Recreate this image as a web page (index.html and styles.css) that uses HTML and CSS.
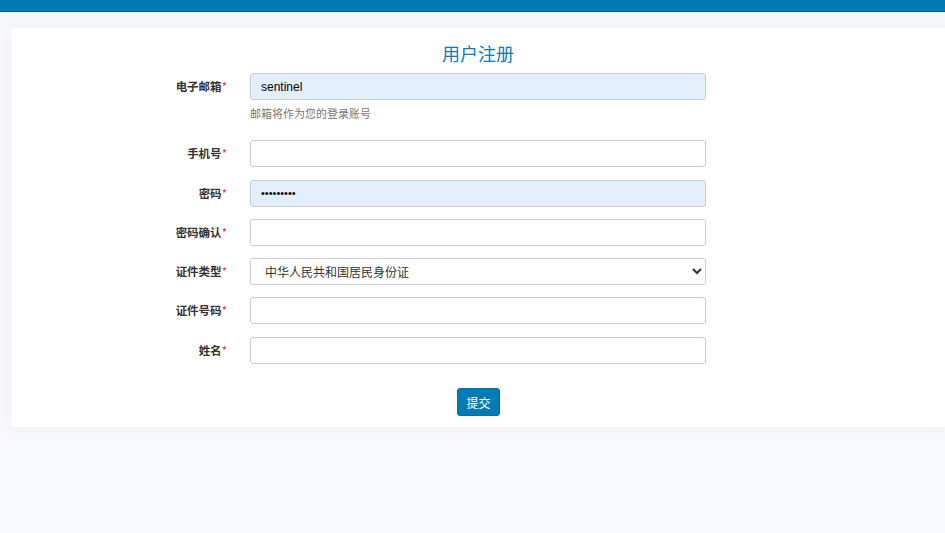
FILE: index.html
```html
<!DOCTYPE html>
<html lang="zh-CN">
<head>
<meta charset="utf-8">
<title>用户注册</title>
<link rel="stylesheet" href="styles.css">
</head>
<body>
<div class="topbar"></div>
<main class="card">
  <h1 class="title">用户注册</h1>
  <form class="form">
    <div class="row">
      <label class="label">电子邮箱<span class="req">*</span></label>
      <div class="field">
        <input class="control autofill" type="text" value="sentinel">
        <div class="help">邮箱将作为您的登录账号</div>
      </div>
    </div>
    <div class="row">
      <label class="label">手机号<span class="req">*</span></label>
      <div class="field"><input class="control" type="text"></div>
    </div>
    <div class="row">
      <label class="label">密码<span class="req">*</span></label>
      <div class="field"><input class="control autofill pw" type="password" value="sentinel1"></div>
    </div>
    <div class="row">
      <label class="label">密码确认<span class="req">*</span></label>
      <div class="field"><input class="control" type="password"></div>
    </div>
    <div class="row">
      <label class="label">证件类型<span class="req">*</span></label>
      <div class="field">
        <select class="control select">
          <option>中华人民共和国居民身份证</option>
        </select>
      </div>
    </div>
    <div class="row">
      <label class="label">证件号码<span class="req">*</span></label>
      <div class="field"><input class="control" type="text"></div>
    </div>
    <div class="row">
      <label class="label">姓名<span class="req">*</span></label>
      <div class="field"><input class="control" type="text"></div>
    </div>
    <div class="actions">
      <button class="btn" type="button">提交</button>
    </div>
  </form>
</main>
</body>
</html>
```
FILE: styles.css
```css
* { box-sizing: border-box; }
html, body { margin: 0; padding: 0; }
body {
  background: #f8f9fe;
  font-family: "Noto Sans CJK SC", "Liberation Sans", sans-serif;
  font-size: 12px;
  color: #333;
  overflow: hidden;
  width: 945px;
  height: 533px;
}
.topbar {
  height: 12px;
  background: #007bb6;
  border-bottom: 1px solid #005d8a;
  box-shadow: 0 2px 14px rgba(0, 0, 0, 0.04);
}
.card {
  margin: 16px 0 0 11px;
  width: 934px;
  height: 399px;
  background: #fff;
  box-shadow: 0 0 12px rgba(40, 50, 90, 0.06);
  padding-top: 12px;
}
.title {
  margin: 0;
  text-align: center;
  font-size: 18px;
  font-weight: normal;
  color: #0a7bbf;
  line-height: 26px;
  height: 26px;
}
.form {
  margin-top: 7px;
}
.row {
  display: flex;
  align-items: flex-start;
  margin-bottom: 12.25px;
}
.label {
  width: 216px;
  text-align: right;
  font-weight: bold;
  font-size: 11.5px;
  line-height: 27px;
  color: #333;
  flex: none;
}
.req { color: #e23a12; font-weight: normal; }
.field {
  margin-left: 23px;
  width: 456px;
}
.control {
  display: block;
  width: 456px;
  height: 27px;
  border: 1px solid #ccc;
  border-radius: 3px;
  background: #fff;
  font-family: "Liberation Sans", "Noto Sans CJK SC", sans-serif;
  font-size: 12px;
  color: #333;
  padding: 0 10px;
  outline: none;
}
.autofill { background: #e3eefb; color: #000; }
.pw { font-size: 11px; letter-spacing: 0; }
.select {
  font-family: "Noto Sans CJK SC", sans-serif;
  padding-left: 10px;
  color: #333;
}
.help {
  margin-top: 5px;
  margin-bottom: 7px;
  font-size: 11px;
  color: #777;
  line-height: 16px;
}
.actions {
  display: flex;
  justify-content: center;
  padding-left: 1px;
  margin-top: 24.75px;
}
.btn {
  width: 43px;
  height: 28px;
  background: #007bb6;
  color: #fff;
  border: 1px solid #0070a8;
  border-radius: 3px;
  font-family: "Noto Sans CJK SC", sans-serif;
  font-size: 12px;
  padding: 0;
}
```
